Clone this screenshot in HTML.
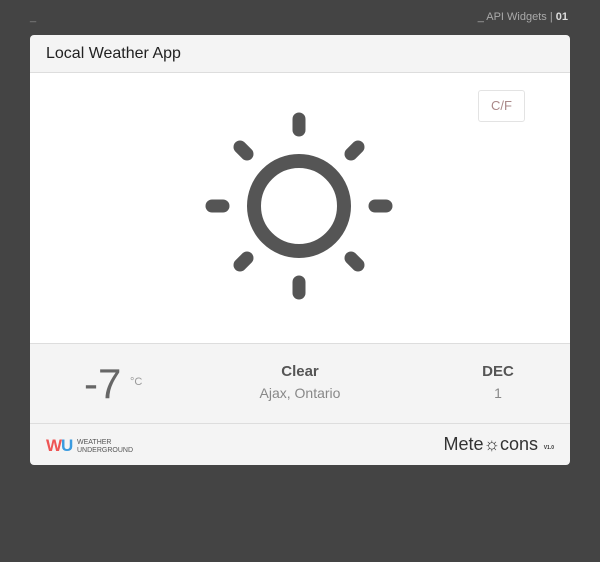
<!DOCTYPE html>
<html><head><style>
body{margin:0;width:600px;height:562px;background:#444;font-family:"Liberation Sans",sans-serif;position:relative;overflow:hidden}
.top{position:absolute;right:32px;top:11px;color:#aaa;font-size:11px}
.top b{color:#ddd}
.us{position:absolute;left:30px;top:11px;color:#888;font-size:11px}
.card{position:absolute;left:30px;top:35px;width:540px;height:430px;background:#f4f4f4;border-radius:4px;overflow:hidden}
.hd{height:37px;border-bottom:1px solid #ddd;font-size:16px;color:#222;line-height:37px;padding-left:16px}
.body{position:absolute;top:38px;left:0;width:540px;height:270px;background:#fff;border-bottom:1px solid #ddd}
.cf{position:absolute;left:448px;top:17px;width:45px;height:30px;border:1px solid #e3e3e3;border-radius:3px;color:#a88;font-size:13px;text-align:center;line-height:30px}
.stats{position:absolute;top:309px;left:0;width:540px;height:79px;border-bottom:1px solid #ddd}
.ft{position:absolute;top:389px;left:0;width:540px;height:41px}
</style></head><body>
<div class="us">_</div>
<div class="top">_ API Widgets | <b>01</b></div>
<div class="card">
<div class="hd">Local Weather App</div>
<div class="body">
<div class="cf">C/F</div>
<svg width="540" height="270" style="position:absolute;left:0;top:0">
<g stroke="#555" stroke-linecap="round" fill="none">
<circle cx="269" cy="133" r="45" stroke-width="14"/>
<g stroke-width="13">
<line x1="269" y1="46" x2="269" y2="57"/>
<line x1="269" y1="209" x2="269" y2="220"/>
<line x1="182" y1="133" x2="193" y2="133"/>
<line x1="345" y1="133" x2="356" y2="133"/>
<line x1="210" y1="74" x2="217" y2="81"/>
<line x1="321" y1="185" x2="328" y2="192"/>
<line x1="210" y1="192" x2="217" y2="185"/>
<line x1="321" y1="81" x2="328" y2="74"/>
</g></g></svg>
</div>
<div class="stats">
<div style="position:absolute;left:54px;top:16px;font-size:42px;color:#666">-7</div>
<div style="position:absolute;left:100px;top:32px;font-size:11px;color:#999">°C</div>
<div style="position:absolute;left:170px;width:200px;text-align:center;top:19px;font-size:15px;font-weight:bold;color:#555">Clear</div>
<div style="position:absolute;left:170px;width:200px;text-align:center;top:41px;font-size:14px;color:#888">Ajax, Ontario</div>
<div style="position:absolute;left:418px;width:100px;text-align:center;top:19px;font-size:15px;font-weight:bold;color:#555">DEC</div>
<div style="position:absolute;left:418px;width:100px;text-align:center;top:41px;font-size:14px;color:#888">1</div>
</div>
<div class="ft">
<div style="position:absolute;left:16px;top:12px;font-size:17px;font-weight:bold;color:#e55;letter-spacing:-1px">W<span style="color:#3a9be0">U</span></div>
<div style="position:absolute;left:47px;top:15px;font-size:7px;line-height:8px;color:#555">WEATHER<br>UNDERGROUND</div>
<div style="position:absolute;right:32px;top:10px;font-size:18px;color:#333">Mete☼cons</div>
<div style="position:absolute;right:16px;top:21px;font-size:5px;color:#333;font-weight:bold">V1.0</div>
</div>
</div>
</body></html>
